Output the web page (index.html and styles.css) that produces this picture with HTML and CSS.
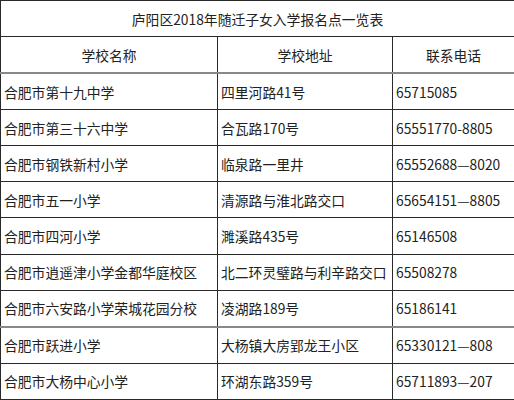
FILE: index.html
```html
<!DOCTYPE html>
<html lang="zh">
<head>
<meta charset="utf-8">
<link rel="stylesheet" href="styles.css">
</head>
<body>
<table class="list">
  <colgroup>
    <col class="c1"><col class="c2"><col class="c3">
  </colgroup>
  <tr class="title"><td colspan="3">庐阳区2018年随迁子女入学报名点一览表</td></tr>
  <tr class="head"><td>学校名称</td><td>学校地址</td><td>联系电话</td></tr>
  <tr><td>合肥市第十九中学</td><td>四里河路41号</td><td>65715085</td></tr>
  <tr><td>合肥市第三十六中学</td><td>合瓦路170号</td><td>65551770-8805</td></tr>
  <tr><td>合肥市钢铁新村小学</td><td>临泉路一里井</td><td>65552688—8020</td></tr>
  <tr><td>合肥市五一小学</td><td>清源路与淮北路交口</td><td>65654151—8805</td></tr>
  <tr><td>合肥市四河小学</td><td>濉溪路435号</td><td>65146508</td></tr>
  <tr><td>合肥市逍遥津小学金都华庭校区</td><td>北二环灵璧路与利辛路交口</td><td>65508278</td></tr>
  <tr class="gray"><td>合肥市六安路小学荣城花园分校</td><td>凌湖路189号</td><td>65186141</td></tr>
  <tr><td>合肥市跃进小学</td><td>大杨镇大房郢龙王小区</td><td>65330121—808</td></tr>
  <tr><td>合肥市大杨中心小学</td><td>环湖东路359号</td><td>65711893—207</td></tr>
</table>
</body>
</html>
```
FILE: styles.css
```css
html, body {
  margin: 0;
  padding: 0;
  background: #fff;
}
.list {
  width: 514px;
  height: 400px;
  border-collapse: collapse;
  table-layout: fixed;
  font-family: "Noto Sans CJK SC", "Microsoft YaHei", sans-serif;
  font-size: 13.8px;
  color: #222;
}
.c1 { width: 217px; }
.c2 { width: 175px; }
.c3 { width: 122px; }
.list td {
  border: 1px solid #2a2a2a;
  padding: 0 0 0 3px;
  height: 35px;
  white-space: nowrap;
  overflow: hidden;
  vertical-align: middle;
  text-align: left;
}
.title td, .head td {
  text-align: center;
  padding: 0;
}
.head td {
  border-bottom: 2px solid #888;
}
.gray td {
  border-bottom: 2px solid #888;
}
```
